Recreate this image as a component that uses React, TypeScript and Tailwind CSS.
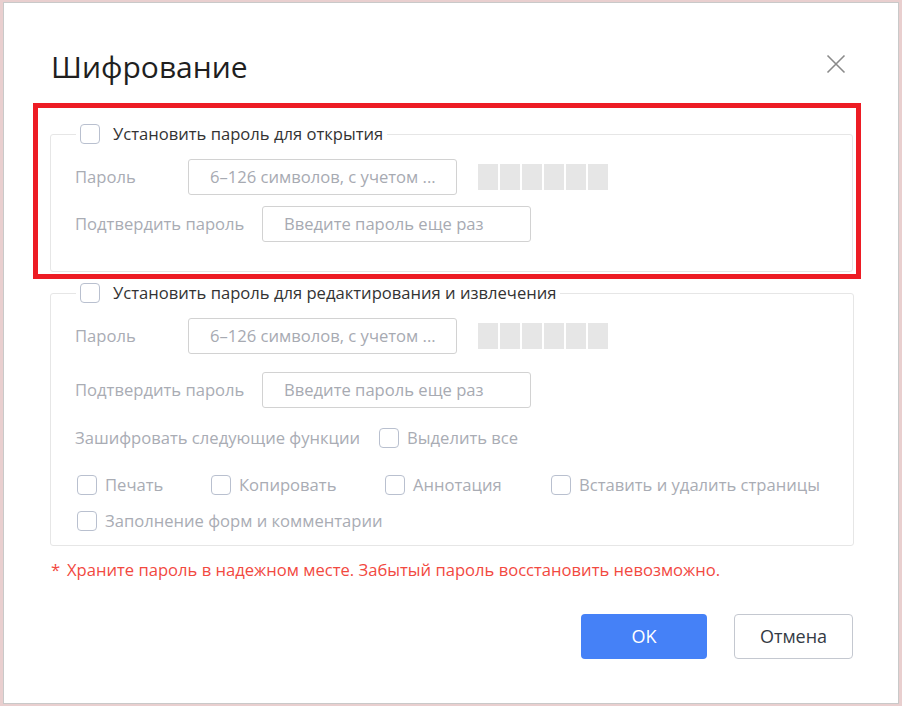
import React from 'react';

const font = { fontFamily: '"Open Sans", "Noto Sans", "Liberation Sans", sans-serif' };

function Box({ className = '' }: { className?: string }) {
  return (
    <span
      className={
        'inline-block w-[20px] h-[20px] shrink-0 rounded-[4px] border-[1.5px] border-[#b9c0cf] bg-white ' +
        className
      }
    />
  );
}

function Field({ placeholder, width }: { placeholder: string; width: string }) {
  return (
    <div
      className={
        'h-[36px] rounded-[3px] border-[1.5px] border-[#d2d2d2] pl-[21px] flex items-center text-[16.6px] text-[#a7aab2] ' +
        width
      }
    >
      {placeholder}
    </div>
  );
}

function Strength() {
  return (
    <div className="flex gap-[2px] ml-[21px]">
      {[0, 1, 2, 3, 4, 5].map(i => (
        <span key={i} className="w-[20px] h-[26px] bg-[#e6e6e6]" />
      ))}
    </div>
  );
}

function PasswordRows({ gap }: { gap: string }) {
  return (
    <div className={'flex flex-col ' + gap}>
      <div className="flex items-center">
        <span className="w-[113px] text-[16.6px] text-[#a9acb4]">Пароль</span>
        <Field placeholder="6–126 символов, с учетом ..." width="w-[269px]" />
        <Strength />
      </div>
      <div className="flex items-center">
        <span className="w-[187px] text-[16.6px] text-[#a9acb4]">Подтвердить пароль</span>
        <Field placeholder="Введите пароль еще раз" width="w-[269px]" />
      </div>
    </div>
  );
}

function Option({ label, width }: { label: string; width?: string }) {
  return (
    <div className={'flex items-center h-[20px] ' + (width ?? '')}>
      <Box />
      <span className="ml-[8px] text-[16.6px] leading-[20px] text-[#a9acb4]">{label}</span>
    </div>
  );
}

export default function App() {
  return (
    <div className="w-[902px] h-[706px] bg-[#e9cfcf] pt-[2px] pl-[3px]" style={font}>
      <div className="w-[896px] h-[702px] bg-white border border-[#c9c9c9] flex flex-col">
        <div className="flex items-center justify-between pl-[47px] pr-[52px] pt-[48px] h-[100px]">
          <h1 className="text-[30px] leading-[36px] text-[#1f1f1f] -mt-[20px]">Шифрование</h1>
          <svg width="20" height="20" viewBox="0 0 20 20" className="-mt-[27px]">
            <path d="M1.5 1.5 L18.5 18.5 M18.5 1.5 L1.5 18.5" stroke="#8a8a8a" strokeWidth="1.6" fill="none" />
          </svg>
        </div>

        <div className="ml-[29px] w-[828px] h-[176px] border-[5px] border-[#ed1c24] pt-[16px] pl-[12px] pr-[3px]">
          <fieldset className="border border-[#e6e6e6] rounded-[3px] pl-[24px] pb-[29px]">
            <legend className="ml-[1px] px-[4px] flex items-center">
              <Box />
              <span className="ml-[13px] text-[16.6px] leading-[20px] text-[#333333]">
                Установить пароль для открытия
              </span>
            </legend>
            <div className="pt-[15px]">
              <PasswordRows gap="gap-[11px]" />
            </div>
          </fieldset>
        </div>

        <fieldset className="mt-[4px] ml-[46px] w-[804px] border border-[#e6e6e6] rounded-[3px] pl-[24px] pb-[14px]">
          <legend className="ml-[1px] px-[4px] flex items-center">
            <Box />
            <span className="ml-[13px] text-[16.6px] leading-[20px] text-[#333333]">
              Установить пароль для редактирования и извлечения
            </span>
          </legend>
          <div className="pt-[15px]">
            <PasswordRows gap="gap-[18px]" />
          </div>
          <div className="flex items-center mt-[20px] h-[20px]">
            <span className="text-[16.6px] leading-[20px] text-[#a9acb4] mr-[19px]">Зашифровать следующие функции</span>
            <Option label="Выделить все" />
          </div>
          <div className="flex items-center mt-[27px] ml-[2px]">
            <Option label="Печать" width="w-[134px]" />
            <Option label="Копировать" width="w-[174px]" />
            <Option label="Аннотация" width="w-[166px]" />
            <Option label="Вставить и удалить страницы" />
          </div>
          <div className="flex items-center mt-[16px] ml-[2px]">
            <Option label="Заполнение форм и комментарии" />
          </div>
        </fieldset>

        <div className="mt-[12px] ml-[47px] flex items-center text-[16.6px] leading-[24px] text-[#f2493f]">
          <span className="w-[16px]">*</span>
          <span>Храните пароль в надежном месте. Забытый пароль восстановить невозможно.</span>
        </div>

        <div className="mt-[32px] flex justify-end gap-[27px] pr-[45px]">
          <button className="w-[126px] h-[45px] rounded-[4px] bg-[#4581f7] text-white text-[18px]">OK</button>
          <button className="w-[119px] h-[45px] rounded-[4px] border border-[#c4c8d0] bg-white text-[#333a44] text-[18px]">
            Отмена
          </button>
        </div>
      </div>
    </div>
  );
}
